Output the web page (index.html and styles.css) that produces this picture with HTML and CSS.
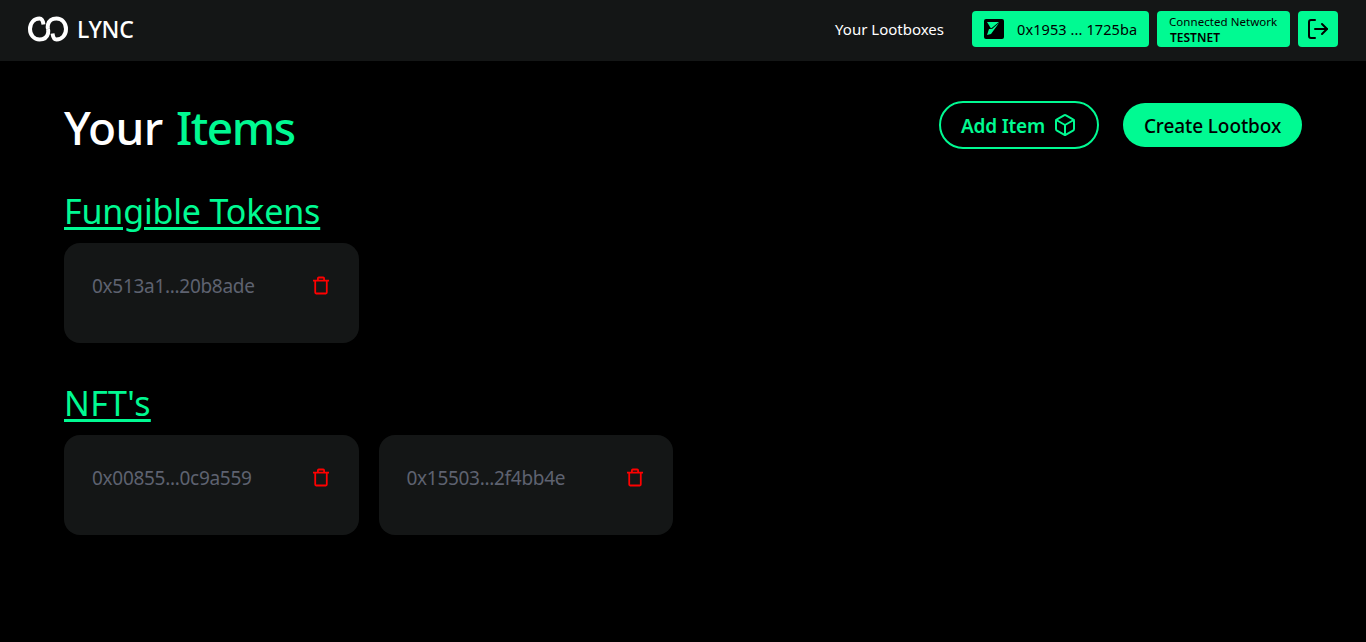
FILE: index.html
```html
<!DOCTYPE html>
<html lang="en">
<head>
<meta charset="utf-8">
<title>LYNC - Your Items</title>
<link rel="stylesheet" href="styles.css">
</head>
<body>
<header class="topbar">
  <a class="brand">
    <svg class="brand-logo" viewBox="0 0 40 26" width="40" height="26" fill="none" stroke="#fff" stroke-width="4">
      <path d="M15.500 8.500C15 5 13.500 2.500 11.500 2.500 6 2.500 2 7 2 13s4 10.500 9.500 10.500c4 0 7.500-2 8.500-6 .4-1.500.4-3 0-4.500" transform="rotate(0)"/>
      <path d="M24.500 17.500c.5 3.500 2 6 4 6 5.500 0 9.500-4.500 9.500-10.500S34 2.500 28.500 2.500c-4 0-7.500 2-8.500 6-.4 1.500-.4 3 0 4.500"/>
    </svg>
    <span class="brand-name">LYNC</span>
  </a>
  <nav class="topnav">
    <a class="nav-link">Your Lootboxes</a>
    <div class="chip wallet">
      <svg class="avatar" viewBox="0 0 20 20" width="20" height="20">
        <rect width="20" height="20" rx="2" fill="#000"/>
        <path d="M3 3h12L7 9.500 3 3z" fill="#00fa92"/>
        <path d="M3 16l2-6h3l7-6-8 11-4 1z" fill="#00fa92"/>
      </svg>
      <span>0x1953 ... 1725ba</span>
    </div>
    <div class="chip network">
      <span class="network-label">Connected Network</span>
      <span class="network-name">TESTNET</span>
    </div>
    <button class="chip logout" aria-label="Log out">
      <svg viewBox="0 0 24 24" width="24" height="24" fill="none" stroke="#000" stroke-width="2" stroke-linecap="round" stroke-linejoin="round">
        <path d="M9 3H5a2 2 0 0 0-2 2v14a2 2 0 0 0 2 2h4"/>
        <path d="M16 17l5-5-5-5"/>
        <path d="M21 12H9"/>
      </svg>
    </button>
  </nav>
</header>
<main class="content">
  <div class="page-head">
    <h1 class="title">Your <span class="accent">Items</span></h1>
    <div class="actions">
      <button class="btn btn-outline">Add Item
        <svg viewBox="0 0 24 24" width="24" height="24" fill="none" stroke="#00fa92" stroke-width="2" stroke-linecap="round" stroke-linejoin="round">
          <path d="M21 16V8a2 2 0 0 0-1-1.730l-7-4a2 2 0 0 0-2 0l-7 4A2 2 0 0 0 3 8v8a2 2 0 0 0 1 1.730l7 4a2 2 0 0 0 2 0l7-4A2 2 0 0 0 21 16z"/>
          <path d="M3.300 7L12 12l8.700-5"/>
          <path d="M12 22V12"/>
        </svg>
      </button>
      <button class="btn btn-solid">Create Lootbox</button>
    </div>
  </div>

  <section class="group">
    <h2 class="group-title">Fungible Tokens</h2>
    <div class="cards">
      <article class="card">
        <span class="address">0x513a1...20b8ade</span>
        <svg class="trash" viewBox="0 0 18 20" width="16" height="19" fill="none" stroke="#f00" stroke-width="2"><path d="M0 4.500h18M2.500 4.500V18a1 1 0 0 0 1 1h11a1 1 0 0 0 1-1V4.500M5.500 4.500V2a1 1 0 0 1 1-1h5a1 1 0 0 1 1 1v2.500"/></svg>
      </article>
    </div>
  </section>

  <section class="group">
    <h2 class="group-title group-title-nft">NFT's</h2>
    <div class="cards">
      <article class="card">
        <span class="address">0x00855...0c9a559</span>
        <svg class="trash" viewBox="0 0 18 20" width="16" height="19" fill="none" stroke="#f00" stroke-width="2"><path d="M0 4.500h18M2.500 4.500V18a1 1 0 0 0 1 1h11a1 1 0 0 0 1-1V4.500M5.500 4.500V2a1 1 0 0 1 1-1h5a1 1 0 0 1 1 1v2.500"/></svg>
      </article>
      <article class="card">
        <span class="address">0x15503...2f4bb4e</span>
        <svg class="trash" viewBox="0 0 18 20" width="16" height="19" fill="none" stroke="#f00" stroke-width="2"><path d="M0 4.500h18M2.500 4.500V18a1 1 0 0 0 1 1h11a1 1 0 0 0 1-1V4.500M5.500 4.500V2a1 1 0 0 1 1-1h5a1 1 0 0 1 1 1v2.500"/></svg>
      </article>
    </div>
  </section>
</main>
</body>
</html>
```
FILE: styles.css
```css
* { box-sizing: border-box; }
html, body { margin: 0; height: 100%; }
body {
  background: #000;
  color: #fff;
  font-family: "Noto Sans", "Open Sans", sans-serif;
  overflow: hidden;
}
.topbar {
  height: 61px;
  background: #141616;
  display: flex;
  align-items: center;
  justify-content: space-between;
  padding: 0 28px 3px;
}
.brand { display: flex; align-items: center; gap: 9px; }
.brand-logo { display: block; }
.brand-name { font-size: 23px; font-weight: 500; letter-spacing: -0.2px; }
.topnav { display: flex; align-items: center; gap: 8px; }
.nav-link { font-size: 15px; letter-spacing: 0; margin-right: 20px; }
.chip {
  height: 36px;
  background: #00fa92;
  color: #000;
  border: 0;
  border-radius: 4px;
  display: flex;
  align-items: center;
  font-family: inherit;
}
.wallet { width: 177px; padding: 0 12px; gap: 13px; font-size: 14.500px; letter-spacing: 0.1px; white-space: nowrap; }
.avatar { display: block; flex: none; }
.network { width: 133px; flex-direction: column; align-items: flex-start; justify-content: center; padding: 1px 12px 0; line-height: 16px; }
.network-label { font-size: 11.500px; letter-spacing: 0.05px; white-space: nowrap; }
.network-name { font-size: 12px; font-weight: 600; letter-spacing: 0; margin-left: 1px; }
.logout { width: 40px; justify-content: center; padding: 0; }
.content { padding: 0 64px; }
.page-head {
  display: flex;
  justify-content: space-between;
  align-items: center;
  height: 130px;
}
.title { margin: 0; font-size: 46px; font-weight: 500; letter-spacing: -0.6px; line-height: 60px; position: relative; top: 1px; }
.accent { color: #00fa92; margin-left: 2px; letter-spacing: -1.500px; }
.actions { display: flex; align-items: center; gap: 24px; position: relative; top: -1px; }
.btn {
  font-family: inherit;
  font-size: 19px;
  font-weight: 500;
  letter-spacing: -0.1px;
  border-radius: 24px;
  display: flex;
  align-items: center;
  justify-content: center;
  padding: 2px 0 0;
}
.btn-outline { width: 160px; height: 48px; gap: 8px; background: transparent; color: #00fa92; border: 2px solid #00fa92; letter-spacing: -0.2px; font-weight: 600; }
.btn-outline svg { margin-top: -2px; }
.btn-solid { width: 179px; height: 44px; background: #00fa92; color: #000; border: 0; }
.group { margin-bottom: 40px; }
.group-title {
  margin: 0 0 10px;
  font-size: 34px;
  font-weight: 400;
  letter-spacing: -0.17px;
  line-height: 40px;
  padding-bottom: 2px;
  color: #00fa92;
  text-decoration: underline;
  text-decoration-thickness: 3px;
  text-underline-offset: 3px;
}
.group-title-nft { letter-spacing: 0.3px; }
.cards { display: flex; gap: 20px; }
.card {
  width: 294.500px;
  height: 100px;
  background: #141616;
  border-radius: 16px;
  padding: 28px 30px 0 28px;
  display: flex;
  justify-content: space-between;
  align-items: flex-start;
}
.address { font-size: 19px; letter-spacing: -0.3px; color: #5e6270; line-height: 30px; }
.trash { display: block; margin-top: 5px; }
```
